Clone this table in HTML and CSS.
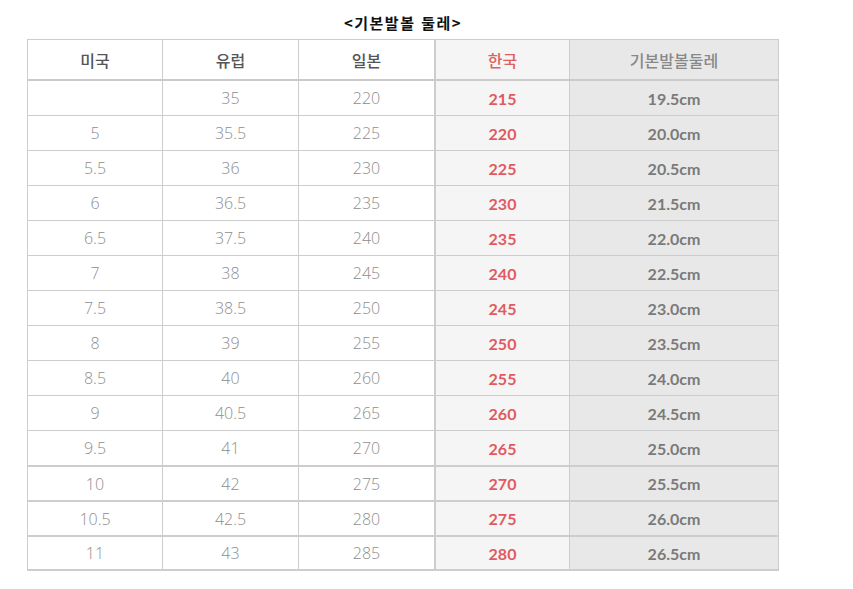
FILE: index.html
```html
<!DOCTYPE html>
<html lang="ko">
<head>
<meta charset="utf-8">
<link rel="stylesheet" href="styles.css">
</head>
<body>
<div class="wrap">
  <h1 class="title">&lt;기본발볼 둘레&gt;</h1>
  <table class="size">
    <thead>
      <tr>
        <th>미국</th><th>유럽</th><th>일본</th><th class="kr">한국</th><th class="cm">기본발볼둘레</th>
      </tr>
    </thead>
    <tbody>
      <tr><td></td><td>35</td><td>220</td><td class="kr">215</td><td class="cm">19.5cm</td></tr>
      <tr><td>5</td><td>35.5</td><td>225</td><td class="kr">220</td><td class="cm">20.0cm</td></tr>
      <tr><td>5.5</td><td>36</td><td>230</td><td class="kr">225</td><td class="cm">20.5cm</td></tr>
      <tr><td>6</td><td>36.5</td><td>235</td><td class="kr">230</td><td class="cm">21.5cm</td></tr>
      <tr><td>6.5</td><td>37.5</td><td>240</td><td class="kr">235</td><td class="cm">22.0cm</td></tr>
      <tr><td>7</td><td>38</td><td>245</td><td class="kr">240</td><td class="cm">22.5cm</td></tr>
      <tr><td>7.5</td><td>38.5</td><td>250</td><td class="kr">245</td><td class="cm">23.0cm</td></tr>
      <tr><td>8</td><td>39</td><td>255</td><td class="kr">250</td><td class="cm">23.5cm</td></tr>
      <tr><td>8.5</td><td>40</td><td>260</td><td class="kr">255</td><td class="cm">24.0cm</td></tr>
      <tr><td>9</td><td>40.5</td><td>265</td><td class="kr">260</td><td class="cm">24.5cm</td></tr>
      <tr><td>9.5</td><td>41</td><td>270</td><td class="kr">265</td><td class="cm">25.0cm</td></tr>
      <tr class="thick"><td>10</td><td>42</td><td>275</td><td class="kr">270</td><td class="cm">25.5cm</td></tr>
      <tr class="thick"><td>10.5</td><td>42.5</td><td>280</td><td class="kr">275</td><td class="cm">26.0cm</td></tr>
      <tr class="thick"><td>11</td><td>43</td><td>285</td><td class="kr">280</td><td class="cm">26.5cm</td></tr>
    </tbody>
  </table>
</div>
</body>
</html>
```

FILE: styles.css
```css
html, body {
  margin: 0;
  padding: 0;
  background: #fff;
}
.wrap {
  padding: 17px 0 0 27px;
  width: 752px;
}
.title {
  margin: 0 0 10px 0;
  text-align: center;
  font-family: "Noto Sans CJK KR", sans-serif;
  font-weight: 700;
  font-size: 15px;
  line-height: 12px;
  color: #111;
  letter-spacing: 1.5px;
}
.size {
  border-collapse: collapse;
  width: 745px;
  table-layout: fixed;
  font-family: "Open Sans", "Noto Sans CJK KR", sans-serif;
}
.size th, .size td {
  border: 1px solid #cdcdcd;
  text-align: center;
  padding: 0;
}
.size th:nth-child(1), .size td:nth-child(1) { width: 134px; }
.size th:nth-child(2), .size td:nth-child(2) { width: 135px; }
.size th:nth-child(3), .size td:nth-child(3) { width: 135px; }
.size th:nth-child(4), .size td:nth-child(4) { width: 133px; border-left: 2px solid #cdcdcd; }
.size th:nth-child(5), .size td:nth-child(5) { width: 208px; }
.size th {
  height: 39px;
  border-bottom: 2px solid #cacaca;
  font-family: "Noto Sans CJK KR", sans-serif;
  font-weight: 500;
  font-size: 16px;
  color: #555;
}
.size td {
  height: 34px;
  font-size: 16px;
  font-weight: 300;
  color: #8e8e8e;
}
.size tr.thick td {
  border-top: 2px solid #cdcdcd;
  height: 33px;
}
.size tbody tr:last-child td {
  border-bottom: 2px solid #cdcdcd;
  height: 32px;
}
.size th.kr {
  color: #e06060;
  background: #f5f5f5;
}
.size th.cm {
  color: #888;
  background: #e8e8e8;
}
.size td.kr {
  background: #f5f5f5;
  color: #e05a60;
  font-family: "Lato", sans-serif;
  font-weight: 700;
}
.size td.cm {
  background: #e8e8e8;
  color: #7a7a7a;
  font-family: "Lato", sans-serif;
  font-weight: 700;
}
```
